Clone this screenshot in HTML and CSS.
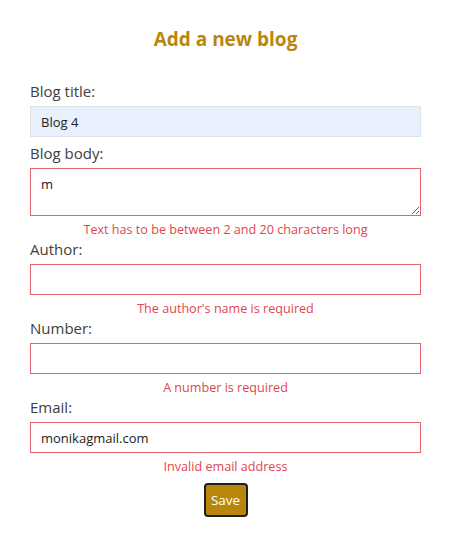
FILE: index.html
```html
<!DOCTYPE html>
<html lang="en">
<head>
<meta charset="utf-8">
<title>Add a new blog</title>
<link rel="stylesheet" href="styles.css">
</head>
<body>
<div class="page">
  <h2 class="title">Add a new blog</h2>
  <form class="form">
    <div class="field field-ok">
      <label class="label" for="title">Blog title:</label>
      <input class="input input-autofill" id="title" type="text" value="Blog 4">
    </div>
    <div class="field">
      <label class="label" for="body">Blog body:</label>
      <textarea class="input textarea input-error" id="body">m</textarea>
      <div class="error">Text has to be between 2 and 20 characters long</div>
    </div>
    <div class="field">
      <label class="label" for="author">Author:</label>
      <input class="input input-error" id="author" type="text" value="">
      <div class="error">The author's name is required</div>
    </div>
    <div class="field">
      <label class="label" for="number">Number:</label>
      <input class="input input-error" id="number" type="text" value="">
      <div class="error">A number is required</div>
    </div>
    <div class="field">
      <label class="label" for="email">Email:</label>
      <input class="input input-error" id="email" type="text" value="monikagmail.com">
      <div class="error">Invalid email address</div>
    </div>
    <button class="save" type="button">Save</button>
  </form>
</div>
</body>
</html>
```

FILE: styles.css
```css
html, body {
  margin: 0;
  padding: 0;
  background: #ffffff;
}

body {
  font-family: "Open Sans", "Noto Sans", sans-serif;
  color: #404040;
}

.page {
  width: 391px;
  margin-left: 30px;
}

.title {
  margin: 0;
  padding-top: 25px;
  text-align: center;
  font-size: 19px;
  line-height: 28px;
  font-weight: 700;
  color: #b8860b;
}

.form {
  margin-top: 28px;
  display: flex;
  flex-direction: column;
}

.field {
  display: flex;
  flex-direction: column;
}

.field-ok {
  margin-bottom: 6px;
}

.label {
  display: block;
  font-size: 15px;
  line-height: 20px;
  color: #404040;
  margin-bottom: 5px;
}

.input {
  box-sizing: border-box;
  width: 100%;
  height: 31px;
  margin: 0;
  padding: 0 10px;
  font-family: "Open Sans", "Noto Sans", sans-serif;
  font-size: 13px;
  color: #222222;
  background: #ffffff;
  border: 1px solid #d4d9e0;
  border-radius: 0;
  outline: none;
}

.input-autofill {
  background: #e8f0fe;
  border-color: #dbe2ec;
}

.input-error {
  border-color: #e0666e;
}

.textarea {
  height: 48px;
  padding: 6px 10px;
  resize: vertical;
  line-height: normal;
  display: block;
}

.error {
  margin-top: 4px;
  margin-bottom: -1px;
  font-size: 12.6px;
  line-height: 20px;
  text-align: center;
  color: #e0464e;
}

.save {
  align-self: center;
  margin-top: 7px;
  box-sizing: border-box;
  width: 44px;
  height: 34px;
  padding: 0;
  font-family: "Open Sans", "Noto Sans", sans-serif;
  font-size: 13.5px;
  color: #ffffff;
  background: #b8860b;
  border: 2px solid #1f1f1f;
  border-radius: 4px;
}
```
